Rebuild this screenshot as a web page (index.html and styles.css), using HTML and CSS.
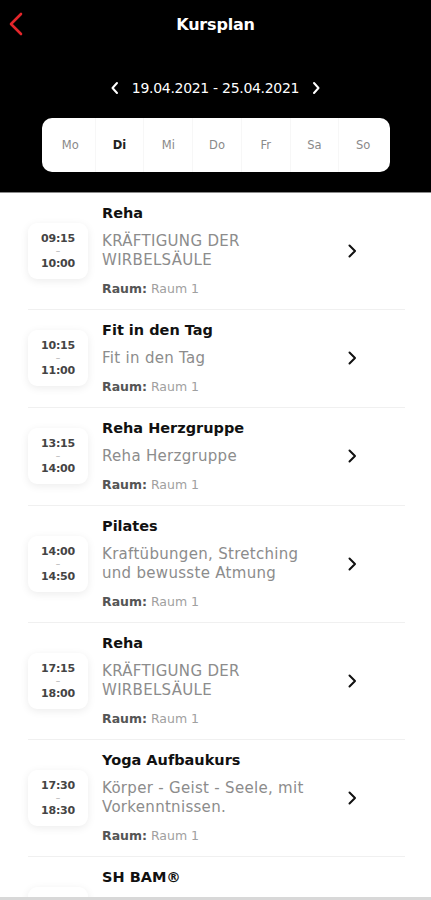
FILE: index.html
```html
<!DOCTYPE html>
<html lang="de">
<head>
<meta charset="utf-8">
<title>Kursplan</title>
<link rel="stylesheet" href="styles.css">
</head>
<body>
<div class="app">
  <header class="header">
    <div class="topbar">
      <button class="back" aria-label="Zurück">
        <svg width="16" height="24" viewBox="0 0 16 24"><path d="M13 2 L3 12 L13 22" fill="none" stroke="#e3262b" stroke-width="2.6" stroke-linecap="round" stroke-linejoin="round"/></svg>
      </button>
      <h1 class="title">Kursplan</h1>
    </div>
    <div class="week">
      <svg class="wk-arrow" width="10" height="14" viewBox="0 0 10 14"><path d="M7 2 L2.5 7 L7 12" fill="none" stroke="#fff" stroke-width="2" stroke-linecap="round" stroke-linejoin="round"/></svg>
      <span class="week-text">19.04.2021 - 25.04.2021</span>
      <svg class="wk-arrow" width="10" height="14" viewBox="0 0 10 14"><path d="M3 2 L7.5 7 L3 12" fill="none" stroke="#fff" stroke-width="2" stroke-linecap="round" stroke-linejoin="round"/></svg>
    </div>
    <div class="days">
      <span class="day">Mo</span>
      <span class="day active">Di</span>
      <span class="day">Mi</span>
      <span class="day">Do</span>
      <span class="day">Fr</span>
      <span class="day">Sa</span>
      <span class="day">So</span>
    </div>
  </header>

  <main class="list">
    <div class="item">
      <div class="time"><span>09:15</span><span class="dash">–</span><span>10:00</span></div>
      <div class="info">
        <div class="name">Reha</div>
        <div class="desc">KRÄFTIGUNG DER WIRBELSÄULE</div>
        <div class="room"><b>Raum:</b> Raum 1</div>
      </div>
      <svg class="chev" width="12" height="16" viewBox="0 0 12 16"><path d="M3.5 2.5 L9 8 L3.5 13.5" fill="none" stroke="#111" stroke-width="2" stroke-linecap="round" stroke-linejoin="round"/></svg>
    </div>
    <div class="item">
      <div class="time"><span>10:15</span><span class="dash">–</span><span>11:00</span></div>
      <div class="info">
        <div class="name">Fit in den Tag</div>
        <div class="desc">Fit in den Tag</div>
        <div class="room"><b>Raum:</b> Raum 1</div>
      </div>
      <svg class="chev" width="12" height="16" viewBox="0 0 12 16"><path d="M3.5 2.5 L9 8 L3.5 13.5" fill="none" stroke="#111" stroke-width="2" stroke-linecap="round" stroke-linejoin="round"/></svg>
    </div>
    <div class="item">
      <div class="time"><span>13:15</span><span class="dash">–</span><span>14:00</span></div>
      <div class="info">
        <div class="name">Reha Herzgruppe</div>
        <div class="desc">Reha Herzgruppe</div>
        <div class="room"><b>Raum:</b> Raum 1</div>
      </div>
      <svg class="chev" width="12" height="16" viewBox="0 0 12 16"><path d="M3.5 2.5 L9 8 L3.5 13.5" fill="none" stroke="#111" stroke-width="2" stroke-linecap="round" stroke-linejoin="round"/></svg>
    </div>
    <div class="item">
      <div class="time"><span>14:00</span><span class="dash">–</span><span>14:50</span></div>
      <div class="info">
        <div class="name">Pilates</div>
        <div class="desc">Kraftübungen, Stretching und bewusste Atmung</div>
        <div class="room"><b>Raum:</b> Raum 1</div>
      </div>
      <svg class="chev" width="12" height="16" viewBox="0 0 12 16"><path d="M3.5 2.5 L9 8 L3.5 13.5" fill="none" stroke="#111" stroke-width="2" stroke-linecap="round" stroke-linejoin="round"/></svg>
    </div>
    <div class="item">
      <div class="time"><span>17:15</span><span class="dash">–</span><span>18:00</span></div>
      <div class="info">
        <div class="name">Reha</div>
        <div class="desc">KRÄFTIGUNG DER WIRBELSÄULE</div>
        <div class="room"><b>Raum:</b> Raum 1</div>
      </div>
      <svg class="chev" width="12" height="16" viewBox="0 0 12 16"><path d="M3.5 2.5 L9 8 L3.5 13.5" fill="none" stroke="#111" stroke-width="2" stroke-linecap="round" stroke-linejoin="round"/></svg>
    </div>
    <div class="item">
      <div class="time"><span>17:30</span><span class="dash">–</span><span>18:30</span></div>
      <div class="info">
        <div class="name">Yoga Aufbaukurs</div>
        <div class="desc">Körper - Geist - Seele, mit Vorkenntnissen.</div>
        <div class="room"><b>Raum:</b> Raum 1</div>
      </div>
      <svg class="chev" width="12" height="16" viewBox="0 0 12 16"><path d="M3.5 2.5 L9 8 L3.5 13.5" fill="none" stroke="#111" stroke-width="2" stroke-linecap="round" stroke-linejoin="round"/></svg>
    </div>
    <div class="item">
      <div class="time"><span>10:05</span><span class="dash">–</span><span>11:00</span></div>
      <div class="info">
        <div class="name">SH BAM®</div>
        <div class="desc">Kräftigung, Ausdauer und Beweglichkeit</div>
        <div class="room"><b>Raum:</b> Raum 1</div>
      </div>
      <svg class="chev" width="12" height="16" viewBox="0 0 12 16"><path d="M3.5 2.5 L9 8 L3.5 13.5" fill="none" stroke="#111" stroke-width="2" stroke-linecap="round" stroke-linejoin="round"/></svg>
    </div>
  </main>
  <div class="bottom-edge"></div>
</div>
</body>
</html>
```
FILE: styles.css
```css
* { box-sizing: border-box; }
html, body { margin: 0; padding: 0; }
body {
  font-family: "DejaVu Sans", "Open Sans", sans-serif;
  background: #fff;
  color: #111;
}
.app {
  width: 431px;
  height: 900px;
  display: flex;
  flex-direction: column;
  overflow: hidden;
}
.header {
  background: #000;
  height: 193px;
  flex: none;
  border-bottom: 1px solid #8a8a8a;
  display: flex;
  flex-direction: column;
}
.topbar {
  height: 48px;
  display: flex;
  align-items: center;
  justify-content: center;
  position: relative;
}
.back {
  position: absolute;
  left: 8px;
  top: 11px;
  background: none;
  border: 0;
  padding: 0;
  width: 18px;
  height: 26px;
  display: flex;
  align-items: center;
}
.title {
  margin: 0;
  color: #fff;
  font-size: 16px;
  font-weight: bold;
  letter-spacing: -0.2px;
}
.week {
  margin-top: 32px;
  display: flex;
  justify-content: center;
  align-items: center;
  gap: 12px;
  color: #fff;
}
.week-text {
  font-size: 14px;
  letter-spacing: -0.3px;
}
.days {
  margin: 22px 41px 0 42px;
  height: 54px;
  background: #fff;
  border-radius: 10px;
  display: grid;
  grid-template-columns: repeat(7, 1fr);
  align-items: center;
  padding: 0 3px 0 4px;
}
.day {
  text-align: center;
  font-size: 11.5px;
  color: #8a8a8a;
  height: 100%;
  display: flex;
  align-items: center;
  justify-content: center;
  border-left: 1px solid #f7f7f7;
}
.day:first-child { border-left: 0; }
.day.active { color: #222; font-weight: bold; }

.list {
  flex: 1;
  overflow: hidden;
  padding: 0 26px 0 28px;
}
.item {
  display: flex;
  align-items: center;
  border-bottom: 1px solid #f0f0f0;
  padding: 10px 0 11px;
}
.time {
  flex: none;
  width: 60px;
  height: 56px;
  border-radius: 9px;
  background: #fff;
  box-shadow: 0 2px 8px rgba(0,0,0,0.08);
  display: flex;
  flex-direction: column;
  align-items: center;
  justify-content: center;
  font-size: 11px;
  font-weight: bold;
  color: #444;
  line-height: 13px;
  letter-spacing: -0.2px;
}
.time span { display: block; }
.time .dash { color: #aaa; font-weight: normal; font-size: 9px; line-height: 12px; }
.info {
  margin-left: 14px;
  width: 218px;
  flex: none;
}
.name {
  font-size: 14.5px;
  font-weight: bold;
  line-height: 20px;
  color: #111;
}
.desc {
  margin-top: 9px;
  font-size: 15px;
  line-height: 19px;
  color: #8c8c8c;
  letter-spacing: 0.3px;
}
.room {
  margin-top: 10px;
  font-size: 12.5px;
  line-height: 18px;
  color: #a0a0a0;
}
.room b { color: #555; }
.chev {
  margin-left: 26px;
  flex: none;
}
.bottom-edge {
  flex: none;
  height: 3px;
  background: #d8d8d8;
}
```
